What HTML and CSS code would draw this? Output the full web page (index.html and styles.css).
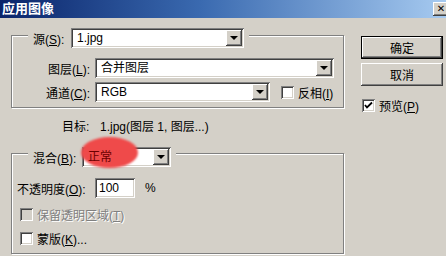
FILE: index.html
```html
<!DOCTYPE html>
<html>
<head>
<meta charset="utf-8">
<link rel="stylesheet" href="styles.css">
</head>
<body>
<div class="window">
  <div class="titlebar">
    <span class="title">应用图像</span>
    <span class="close">✕</span>
  </div>
  <div class="content">
    <div class="left">
      <div class="group g1">
        <div class="legend">
          <span class="lab">源(<u>S</u>):</span>
          <div class="combo c-src"><span class="val">1.jpg</span><span class="arrow"></span></div>
        </div>
        <div class="grid">
          <span class="rlab">图层(<u>L</u>):</span>
          <div class="combo c-layer"><span class="val">合并图层</span><span class="arrow"></span></div>
          <span class="rlab">通道(<u>C</u>):</span>
          <div class="chrow">
            <div class="combo c-chan"><span class="val">RGB</span><span class="arrow"></span></div>
            <span class="check"></span><span class="chtext">反相(<u>I</u>)</span>
          </div>
        </div>
      </div>
      <div class="target"><span class="tlab">目标:</span><span class="tval">1.jpg(图层 1, 图层...)</span></div>
      <div class="group g2">
        <div class="legend">
          <span class="lab">混合(<u>B</u>):</span>
          <div class="combo c-blend"><span class="blob"></span><span class="val red">正常</span><span class="arrow"></span></div>
        </div>
        <div class="oprow">
          <span class="olab">不透明度(<u>O</u>):</span>
          <div class="field">100</div>
          <span class="pct">%</span>
        </div>
        <div class="cbrow r1"><span class="check disabled"></span><span class="chtext dis">保留透明区域(<u>T</u>)</span></div>
        <div class="cbrow r2"><span class="check"></span><span class="chtext">蒙版(<u>K</u>)...</span></div>
      </div>
    </div>
    <div class="right">
      <div class="btn default">确定</div>
      <div class="btn">取消</div>
      <div class="cbrow pv"><span class="check"><svg width="9" height="9" viewBox="0 0 9 9"><path d="M1 4 L3 6.5 L8 1.5" fill="none" stroke="#000" stroke-width="1.8"/></svg></span><span class="chtext">预览(<u>P</u>)</span></div>
    </div>
  </div>
</div>
</body>
</html>
```
FILE: styles.css
```css
* { box-sizing: border-box; }
html, body { margin: 0; padding: 0; }
body {
  width: 446px; height: 256px; overflow: hidden;
  background: #d4d0c8;
  font-family: "Liberation Sans", "Noto Sans CJK SC", sans-serif;
  font-size: 12px; color: #000;
}
u { text-decoration: underline; text-underline-offset: 1px; }
.window { width: 446px; height: 256px; }
.titlebar {
  height: 18px;
  background: linear-gradient(to right, #0a246a 0%, #3a6ab0 45%, #a6caf0 100%);
  display: flex; align-items: center; justify-content: space-between;
  overflow: hidden;
}
.title { color: #fff; font-weight: bold; font-size: 13px; padding-left: 2px; line-height: 18px; }
.close {
  width: 16px; height: 14px; margin-right: -3px;
  background: #d4d0c8;
  box-shadow: inset -1px -1px #404040, inset 1px 1px #fff, inset -2px -2px #808080;
  font-size: 10px; font-weight: bold; line-height: 14px; text-align: center;
  font-family: "DejaVu Sans", sans-serif;
}
.content { display: flex; padding-left: 11px; gap: 17px; }
.left { width: 333px; display: flex; flex-direction: column; padding-top: 17px; }
.group {
  border: 1px solid #808080;
  box-shadow: inset 1px 1px 0 #fff, 1px 1px 0 #fff;
  display: flex; flex-direction: column;
}
.legend {
  display: flex; align-items: center; align-self: flex-start;
  background: #d4d0c8; height: 20px;
  margin-left: 16px; padding: 0 5px;
}
.g1 .legend { margin-top: -8px; }
.g2 .legend { margin-top: -7px; height: 20px; padding-right: 5px; }
.lab { white-space: nowrap; }
.g1 .lab { width: 38px; }
.g2 .lab { width: 49px; }
.combo {
  position: relative;
  height: 20px; background: #fff;
  box-shadow: inset 1px 1px #808080, inset -1px -1px #fff, inset 2px 2px #404040, inset -2px -2px #d4d0c8;
  display: flex; align-items: center; justify-content: space-between;
  padding: 2px;
}
.val { padding-left: 4px; position: relative; z-index: 2; line-height: 16px; }
.arrow {
  width: 16px; height: 16px; background: #d4d0c8; position: relative; z-index: 2;
  box-shadow: inset -1px -1px #404040, inset 1px 1px #fff, inset -2px -2px #808080;
}
.arrow::after {
  content: ""; position: absolute; left: 4px; top: 6px;
  border-left: 4px solid transparent; border-right: 4px solid transparent; border-top: 4px solid #000;
}
.c-src { width: 173px; }
.grid {
  display: grid; grid-template-columns: 78px 1fr; column-gap: 5px; row-gap: 4px;
  margin-top: 10px; padding-bottom: 5px; align-items: center;
}
.rlab { text-align: right; white-space: nowrap; }
.c-layer { width: 239px; }
.chrow { display: flex; align-items: center; }
.c-chan { width: 175px; margin-right: 11px; }
.check {
  width: 13px; height: 13px; background: #fff; flex: none;
  box-shadow: inset 1px 1px #808080, inset -1px -1px #fff, inset 2px 2px #404040, inset -2px -2px #d4d0c8;
  display: flex; align-items: center; justify-content: center;
}
.check.disabled { background: #d4d0c8; }
.chtext { margin-left: 4px; white-space: nowrap; }
.chtext.dis { color: #808080; text-shadow: 1px 1px 0 #fff; }
.target { margin-top: 11px; height: 16px; line-height: 16px; display: flex; padding-left: 51px; }
.tlab { width: 38px; }
.g2 { margin-top: 18px; height: 101px; }
.c-blend { width: 89px; }
.blob {
  position: absolute; left: -1px; top: -10px; width: 57px; height: 31px;
  border-radius: 50%; background: #ef4a4a; filter: blur(1.2px); z-index: 1;
}
.red { color: #6a0000; }
.oprow { display: flex; align-items: center; margin-top: 11px; padding-left: 5px; height: 20px; }
.olab { width: 78px; white-space: nowrap; }
.field {
  width: 40px; height: 20px; background: #fff; padding: 2px 4px; line-height: 16px;
  box-shadow: inset 1px 1px #808080, inset -1px -1px #fff, inset 2px 2px #404040, inset -2px -2px #d4d0c8;
}
.pct { margin-left: 10px; }
.cbrow { display: flex; align-items: center; height: 18px; }
.g2 .cbrow { padding-left: 8px; }
.r1 { margin-top: 7px; }
.r2 { margin-top: 6px; }
.right { display: flex; flex-direction: column; padding-top: 18px; width: 82px; }
.btn {
  width: 82px; height: 23px; background: #d4d0c8;
  box-shadow: inset -1px -1px #404040, inset 1px 1px #fff, inset -2px -2px #808080;
  display: flex; align-items: center; justify-content: center;
}
.btn + .btn { margin-top: 4px; }
.btn.default {
  border: 1px solid #000;
  box-shadow: inset -1px -1px #404040, inset 1px 1px #fff, inset -2px -2px #808080;
}
.pv { margin-top: 10px; padding-left: 1px; }
```
